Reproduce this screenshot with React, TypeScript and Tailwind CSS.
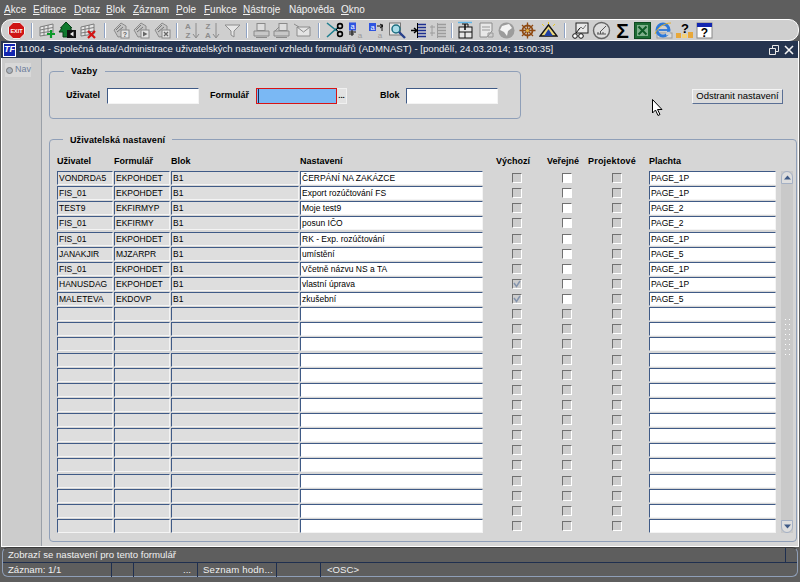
import { ReactNode } from 'react'

const menus = [
  ['A', 'kce', 'w-[29px]'],
  ['E', 'ditace', 'w-[41px]'],
  ['D', 'otaz', 'w-[32px]'],
  ['B', 'lok', 'w-[27px]'],
  ['Z', 'áznam', 'w-[43px]'],
  ['P', 'ole', 'w-[28px]'],
  ['F', 'unkce', 'w-[39px]'],
  ['N', 'ástroje', 'w-[46px]'],
  ['', 'Nápověda', 'w-[52px]'],
  ['O', 'kno', 'w-[30px]'],
]

const records = [
  ['VONDRDA5', 'EKPOHDET', 'B1', 'ČERPÁNÍ NA ZAKÁZCE', 'PAGE_1P', false],
  ['FIS_01', 'EKPOHDET', 'B1', 'Export rozúčtování FS', 'PAGE_1P', false],
  ['TEST9', 'EKFIRMYP', 'B1', 'Moje test9', 'PAGE_2', false],
  ['FIS_01', 'EKFIRMY', 'B1', 'posun IČO', 'PAGE_2', false],
  ['FIS_01', 'EKPOHDET', 'B1', 'RK - Exp. rozúčtování', 'PAGE_1P', false],
  ['JANAKJIR', 'MJZARPR', 'B1', 'umístění', 'PAGE_5', false],
  ['FIS_01', 'EKPOHDET', 'B1', 'Včetně názvu NS a TA', 'PAGE_1P', false],
  ['HANUSDAG', 'EKPOHDET', 'B1', 'vlastní úprava', 'PAGE_1P', true],
  ['MALETEVA', 'EKDOVP', 'B1', 'zkušební', 'PAGE_5', true],
] as const

const rows = Array.from({ length: 24 }, (_, i) => records[i] ?? null)

function Ico({ children }: { children: ReactNode }) {
  return (
    <div className="flex w-[20.7px] shrink-0 justify-center">
      <svg width="19" height="19" viewBox="0 0 19 19">{children}</svg>
    </div>
  )
}

function Sep({ className }: { className: string }) {
  return (
    <div className={`flex shrink-0 justify-center ${className}`}>
      <div className="h-[15px] w-[2px] border-r border-white bg-[#8fa3c4]" />
    </div>
  )
}

function GridDoc() {
  return (
    <g fill="none" stroke="#7c7c7c">
      <path d="M2 6 L15 3 V13 L2 15 Z" fill="#e6e6e6" />
      <path d="M2 9 L15 6.5 M2 12 L15 10 M6 5 V14.5 M10 4 V14" />
    </g>
  )
}

function Stack({ children }: { children: ReactNode }) {
  return (
    <g>
      <path d="M2 9 L9 2 L14 5 L14 15 L6 16 Z" fill="#c4c4c4" stroke="#8c8c8c" />
      <path d="M4 9 L9 4 M5 11 L11 6" stroke="#777" fill="none" />
      <rect x="9" y="9" width="8" height="8" fill="#e4e4e4" stroke="#888" />
      {children}
    </g>
  )
}

function Printer({ fancy }: { fancy?: boolean }) {
  return (
    <g fill="#ddd" stroke="#8a8a8a">
      <rect x={fancy ? 7 : 5} y="2.5" width="8" height="7" />
      <path d="M2 10 H17 V15 H2 Z" fill="#c8c8c8" />
      <path d="M4 16.5 H15" />
      {fancy && <path d="M3 10 L7 6" />}
    </g>
  )
}

function Lines({ c, arrow }: { c: string; arrow?: boolean }) {
  return (
    <g stroke={c} fill="none">
      <path d="M9 3.5 H17 M9 6.5 H17 M9 9.5 H17 M9 12.5 H17 M9 15.5 H17" strokeWidth="1.4" />
      <path d="M8.5 2 V17" stroke={arrow ? '#000' : c} />
      {arrow ? (
        <path d="M2 9.5 H7 M5 7 L8 9.5 L5 12" stroke="#000" strokeWidth="1.4" />
      ) : (
        <path d="M3 4 V15 M1 6 H6 M1 12 H6" />
      )}
    </g>
  )
}

function Field({ children, shade }: { children?: ReactNode; shade?: boolean }) {
  return (
    <div
      className={`h-[14px] truncate border-t border-r border-b border-l border-t-[#3f5a86] border-l-[#3f5a86] border-r-[#f4f4f4] border-b-[#f4f4f4] pl-px text-[8.5px] leading-[13px] text-black ${shade ? 'bg-[#dedede]' : 'bg-white'}`}
    >
      {children}
    </div>
  )
}

function Check({ on, checked }: { on?: boolean; checked?: boolean }) {
  return (
    <div
      className={`flex h-[10px] w-[10px] items-center justify-center border-t border-l border-r border-b border-t-[#707070] border-l-[#707070] border-r-white border-b-white ${on ? 'bg-white' : 'bg-[#cdcdcd]'}`}
    >
      {checked && (
        <svg width="8" height="8" viewBox="0 0 8 8">
          <path d="M1 3 L3.5 6.5 L7 1" fill="none" stroke="#8494ad" strokeWidth="1.5" />
        </svg>
      )}
    </div>
  )
}

function Lov() {
  return (
    <div className="flex h-[16px] w-[10px] items-center justify-center border-t border-r border-b border-[#f0f0f0] bg-[#e2e2e2] text-[8px] leading-none font-bold text-black">
      ...
    </div>
  )
}

export default function App() {
  return (
    <div className="flex h-[582px] w-[800px] flex-col overflow-hidden bg-[#5e5e5e] font-['Liberation_Sans',Arial,sans-serif] text-[10px] text-black">
      {/* Menu */}
      <div className="flex h-[19px] shrink-0 items-center pl-[4px] text-[10px] text-[#f2f2f2]">
        {menus.map(([u, rest, w]) => (
          <span key={rest} className={`shrink-0 ${w}`}>
            <span className="underline">{u}</span>
            {rest}
          </span>
        ))}
      </div>

      {/* Toolbar */}
      <div className="mr-[1px] ml-[1px] flex h-[22px] shrink-0 items-center rounded-[10px] border border-white bg-[#cfcfcf] pl-[4px]">
        <Ico>
          <path d="M6 1.5 H13 L17.5 6 V13 L13 17.5 H6 L1.5 13 V6 Z" fill="#cf1414" stroke="#eee" />
          <text x="9.5" y="11.5" textAnchor="middle" fontSize="5.5" fontWeight="700" fill="#fff">EXIT</text>
        </Ico>
        <Sep className="w-[10px]" />
        <Ico>
          <GridDoc />
          <path d="M13 9 V17 M9 13 H17" stroke="#0a9a2a" strokeWidth="2.2" />
        </Ico>
        <Ico>
          <path d="M8 1 L14 7 L12 7 L15 11 L10 11 L10 16 L5 16 L5 11 L1 11 L4 7 L2.5 7 Z" fill="#0f7a2e" stroke="#063d16" />
          <rect x="9" y="9" width="9" height="8" fill="#111" />
          <path d="M12 13 L15.5 10.5 V15.5 Z" fill="#eee" />
        </Ico>
        <Ico>
          <GridDoc />
          <path d="M9 10 L16 17 M16 10 L9 17" stroke="#d41414" strokeWidth="2.2" />
        </Ico>
        <Sep className="w-[12px]" />
        <Ico>
          <Stack>
            <text x="13" y="15.5" textAnchor="middle" fontSize="7" fontWeight="700" fill="#666">?</text>
          </Stack>
        </Ico>
        <Ico>
          <Stack>
            <path d="M11 10.5 L15.5 13 L11 15.5 Z" fill="#666" />
          </Stack>
        </Ico>
        <Ico>
          <Stack>
            <path d="M11 11 L15 15 M15 11 L11 15" stroke="#666" strokeWidth="1.3" />
          </Stack>
        </Ico>
        <Sep className="w-[8px]" />
        <Ico>
          <text x="6" y="8" textAnchor="middle" fontSize="8" fontWeight="700" fill="#8c8c8c">A</text>
          <text x="6" y="17" textAnchor="middle" fontSize="8" fontWeight="700" fill="#8c8c8c">Z</text>
          <path d="M14 2 V16 M11 13 L14 17 L17 13" fill="none" stroke="#8c8c8c" />
        </Ico>
        <Ico>
          <text x="6" y="8" textAnchor="middle" fontSize="8" fontWeight="700" fill="#8c8c8c">Z</text>
          <text x="6" y="17" textAnchor="middle" fontSize="8" fontWeight="700" fill="#8c8c8c">A</text>
          <path d="M14 2 V16 M11 13 L14 17 L17 13" fill="none" stroke="#8c8c8c" />
        </Ico>
        <Ico>
          <path d="M2 4 H17 L11 10 V16 L8 14 V10 Z" fill="#e6e6e6" stroke="#8c8c8c" />
        </Ico>
        <Sep className="w-[8px]" />
        <Ico>
          <Printer />
        </Ico>
        <Ico>
          <Printer fancy />
        </Ico>
        <Ico>
          <path d="M4 6 H17 V15 H4 Z" fill="#e4e4e4" stroke="#8c8c8c" />
          <path d="M4 6 L10.5 11 L17 6 M1 3 L6 6" fill="none" stroke="#8c8c8c" />
        </Ico>
        <Sep className="w-[12px]" />
        <Ico>
          <path d="M1 2 L11 10 M1 16 L11 7" stroke="#1f7f8f" strokeWidth="1.6" />
          <circle cx="14" cy="5" r="2.4" fill="none" stroke="#000" strokeWidth="1.6" />
          <circle cx="14" cy="13" r="2.4" fill="none" stroke="#000" strokeWidth="1.6" />
          <path d="M10 9 L12.5 6.5 M10 8 L12.5 11" stroke="#000" />
        </Ico>
        <Ico>
          <rect x="3" y="1.5" width="7" height="8" fill="#2f55e0" />
          <text x="6.5" y="8" textAnchor="middle" fontSize="7.5" fill="#fff">a</text>
          <path d="M3 11 H10 M3 13 H8 M6 9 V15" stroke="#111" />
          <text x="14" y="16.5" textAnchor="middle" fontSize="8" fill="#9a9a9a">a</text>
        </Ico>
        <Ico>
          <rect x="2" y="2" width="7" height="8" fill="#2f55e0" />
          <text x="5.5" y="8.5" textAnchor="middle" fontSize="7.5" fill="#fff">a</text>
          <path d="M10 5 H16 M13 3 L16 5 L13 7 M15 3 V10" stroke="#111" fill="none" />
          <text x="13" y="17" textAnchor="middle" fontSize="8" fill="#9a9a9a">a</text>
        </Ico>
        <Ico>
          <rect x="1.5" y="2" width="11" height="12" fill="#e8e8e8" stroke="#777" />
          <circle cx="8" cy="8" r="4" fill="#a8dce8" stroke="#1c6f80" strokeWidth="1.5" />
          <path d="M11 11 L17 17" stroke="#27408b" strokeWidth="2.4" />
        </Ico>
        <Ico>
          <Lines c="#1c2f90" arrow />
        </Ico>
        <Ico>
          <Lines c="#9c9c9c" />
        </Ico>
        <Sep className="w-[6px]" />
        <Ico>
          <path d="M2 1.5 H16" stroke="#5fb6e8" strokeWidth="1.4" />
          <rect x="3" y="6" width="13" height="11" fill="#e6e6e6" stroke="#111" />
          <path d="M3 11 H16 M9 11 V17 M6 3 H12 V6" stroke="#111" fill="none" />
          <path d="M9 3 V9" stroke="#111" strokeWidth="1.6" />
        </Ico>
        <Ico>
          <path d="M3 2 H15 V10 L10 16 H3 Z" fill="#e8e8e8" stroke="#8c8c8c" />
          <path d="M5 6 H13 M5 9 H13 M11 12 H16 V16 H11 Z" fill="none" stroke="#9a9a9a" />
        </Ico>
        <Ico>
          <circle cx="9.5" cy="9.5" r="8" fill="#9c9c9c" />
          <path d="M5 5 L12 3 L15 7 L11 10 L10 15 L7 11 L3 9 Z" fill="#f4f4f4" />
        </Ico>
        <Ico>
          <circle cx="9.5" cy="9.5" r="5" fill="none" stroke="#8f4a12" strokeWidth="1.8" />
          <path d="M9.5 1.5 V17.5 M1.5 9.5 H17.5 M4 4 L15 15 M15 4 L4 15" stroke="#8f4a12" strokeWidth="1.3" />
          <circle cx="9.5" cy="9.5" r="1.6" fill="#e0b040" />
        </Ico>
        <Ico>
          <path d="M9.5 4 L18 15 H1 Z" fill="#ecd87a" stroke="#111" strokeWidth="1.4" />
          <path d="M9.5 8 L14 15 H5 Z" fill="#1e3fa0" />
          <path d="M3 3 L5 5 M16 3 L14 5 M9.5 1 V3" stroke="#e8c820" />
        </Ico>
        <Sep className="w-[12px]" />
        <Ico>
          <rect x="5" y="2" width="12" height="10" fill="#e8e8e8" stroke="#222" />
          <path d="M7 9 L10 6 L12 8 L15 4" fill="none" stroke="#777" />
          <circle cx="4" cy="15" r="2.3" fill="#fff" stroke="#111" />
          <circle cx="10" cy="15" r="2.3" fill="#fff" stroke="#111" />
          <path d="M5 12 L9 7" stroke="#111" />
        </Ico>
        <Ico>
          <circle cx="9.5" cy="9.5" r="8" fill="#dedede" stroke="#666" strokeWidth="1.4" />
          <path d="M5 13 H14 M6 11 V13 M8.5 10 V13 M11 11 V13 M9 10 L14 5" stroke="#555" fill="none" />
        </Ico>
        <Ico>
          <text x="9.5" y="16.5" textAnchor="middle" fontSize="21" fontWeight="700" fill="#000">Σ</text>
        </Ico>
        <Ico>
          <rect x="1.5" y="1.5" width="16" height="16" fill="#1d6b34" stroke="#0e4a20" />
          <rect x="4" y="4" width="11" height="11" fill="#7fb08c" />
          <path d="M5.5 5.5 L13.5 13.5 M13.5 5.5 L5.5 13.5" stroke="#0e5a26" strokeWidth="2" />
        </Ico>
        <Ico>
          <rect x="3" y="12" width="15" height="5" fill="#dcdcdc" stroke="#999" />
          <circle cx="9" cy="9" r="6" fill="none" stroke="#2d78d8" strokeWidth="3" />
          <path d="M5 9 H14" stroke="#2d78d8" strokeWidth="1.8" />
          <path d="M12 13 L16 12" stroke="#cfcfcf" strokeWidth="3" />
          <path d="M1 13 C3 7 10 2 17 2" fill="none" stroke="#e0b030" />
        </Ico>
        <Ico>
          <text x="10" y="12" textAnchor="middle" fontSize="13" fontWeight="700" fill="#000">?</text>
          <rect x="1" y="12" width="5" height="5" fill="#e8a83a" />
          <rect x="7" y="13" width="5" height="4" fill="#f4d27a" />
          <rect x="13" y="11" width="5" height="6" fill="#e8a83a" />
        </Ico>
        <Ico>
          <rect x="2" y="2" width="15" height="15" fill="#fff" stroke="#888" />
          <rect x="2" y="2" width="15" height="4" fill="#1226b0" />
          <text x="9.5" y="16" textAnchor="middle" fontSize="12" fontWeight="700" fill="#000">?</text>
        </Ico>
      </div>

      {/* MDI window */}
      <div className="ml-[1px] flex h-[506px] w-[798px] shrink-0 flex-col border-r border-b border-white">
        <div className="flex h-[17px] shrink-0 items-center bg-[#25344f] pr-[4px] text-[9.6px] text-[#f0f0f0]">
          <div className="mr-[3px] ml-[2px] flex h-[14px] w-[13px] items-center justify-center border border-white bg-[#1226b0] text-[9px] leading-none font-bold text-white italic">
            TF
          </div>
          <span className="whitespace-nowrap">
            11004 - Společná data/Administrace uživatelských nastavení vzhledu formulářů (ADMNAST) - [pondělí, 24.03.2014; 15:00:35]
          </span>
          <div className="ml-auto flex items-center gap-[5px]">
            <svg width="10" height="10" viewBox="0 0 10 10">
              <path d="M3.5 .5 H9.5 V6.5 H7 M.5 3.5 H6.5 V9.5 H.5 Z M3.5 .5 V3.5" fill="none" stroke="#e8e8e8" />
            </svg>
            <svg width="10" height="10" viewBox="0 0 10 10">
              <path d="M1 1 L9 9 M9 1 L1 9" fill="none" stroke="#f4f4f4" strokeWidth="1.6" />
            </svg>
          </div>
        </div>

        <div className="relative flex min-h-0 flex-1 bg-[#d6d6d6]">
          {/* Navigator stub */}
          <div className="w-[41px] shrink-0 border-r border-l border-r-[#9aa0a8] border-l-white bg-[#cccccc] pt-[5px] pl-[3px]">
            <div className="flex h-[14px] w-[26px] items-center gap-[2px] bg-[#d8d8d8] pl-[1px] text-[9px] text-[#6f7f9c]">
              <span className="h-[7px] w-[7px] shrink-0 rounded-full border border-[#777] bg-[#aab4c0]" />
              Nav
            </div>
          </div>

          <div className="flex min-w-0 flex-1 flex-col pt-[13px] pl-[7px]">
            {/* Vazby */}
            <div className="flex items-start">
              <div className="relative h-[48px] w-[472px] shrink-0 rounded-[4px] border border-[#8f9fb8]">
                <span className="absolute top-[-7px] left-[14px] bg-[#d6d6d6] px-[7px] text-[9px] leading-[12px] font-bold tracking-[0.2px]">
                  Vazby
                </span>
                <div className="flex items-center pt-[16px] text-[9px] font-bold">
                  <span className="w-[50px] text-right">Uživatel</span>
                  <div className="ml-[7px] h-[16px] w-[92px] border-t border-r border-b border-l border-t-[#3f5a86] border-l-[#3f5a86] border-r-[#f4f4f4] border-b-[#f4f4f4] bg-white" />
                  <span className="ml-[11px] w-[40px]">Formulář</span>
                  <div className="ml-[6px] flex h-[16px] w-[81px] border border-[#d81414] bg-[#7ab8f4]">
                    <div className="ml-[1px] w-[1px] bg-[#103060]" />
                  </div>
                  <Lov />
                  <span className="ml-[33px] w-[26px]">Blok</span>
                  <div className="h-[16px] w-[92px] border-t border-r border-b border-l border-t-[#3f5a86] border-l-[#3f5a86] border-r-[#f4f4f4] border-b-[#f4f4f4] bg-white" />
                </div>
              </div>
              <div className="mt-[18px] ml-[171px] flex h-[15px] w-[91px] items-center justify-center border-t border-r border-b border-l border-t-[#f4f4f4] border-l-[#f4f4f4] border-r-[#5a6f94] border-b-[#5a6f94] bg-[#dcdcdc] text-[9.5px]">
                Odstranit nastavení
              </div>
            </div>

            {/* Uživatelská nastavení */}
            <div className="relative mt-[20px] h-[403px] w-[748px] rounded-[4px] border border-[#8f9fb8]">
              <span className="absolute top-[-6px] left-[13px] bg-[#d6d6d6] px-[7px] text-[9px] leading-[12px] font-bold tracking-[0.1px]">
                Uživatelská nastavení
              </span>
              <div className="flex pt-[15px] pl-[7px]">
                <div className="w-[720px] shrink-0">
                  <div className="mb-[2px] grid h-[14px] grid-cols-[57px_57px_129px_192px_50px_50px_50px_7px_127px] items-center text-[9px] font-bold">
                    <span>Uživatel</span>
                    <span>Formulář</span>
                    <span>Blok</span>
                    <span>Nastavení</span>
                    <span className="pr-[8px] text-center">Výchozí</span>
                    <span className="pr-[8px] text-center">Veřejné</span>
                    <span className="-ml-[4px] whitespace-nowrap tracking-[0.2px]">Projektové</span>
                    <span />
                    <span>Plachta</span>
                  </div>
                  <div className="grid h-[363px] grid-rows-[repeat(24,1fr)]">
                    {rows.map((r, i) => (
                      <div
                        key={i}
                        className="grid grid-cols-[57px_57px_129px_192px_50px_50px_50px_7px_127px] items-start"
                      >
                        <div className="pr-[1px]">
                          <Field shade>{r?.[0]}</Field>
                        </div>
                        <div className="pr-[1px]">
                          <Field shade>{r?.[1]}</Field>
                        </div>
                        <div className="pr-[1px]">
                          <Field shade>{r?.[2]}</Field>
                        </div>
                        <div className="pr-[9px]">
                          <Field>{r?.[3]}</Field>
                        </div>
                        <div className="flex justify-center pt-[2px]">
                          <Check checked={r?.[5] === true} />
                        </div>
                        <div className="flex justify-center pt-[2px]">
                          <Check on={!!r} />
                        </div>
                        <div className="flex justify-center pt-[2px]">
                          <Check />
                        </div>
                        <span />
                        <Field>{r?.[4]}</Field>
                      </div>
                    ))}
                  </div>
                </div>

                {/* Scrollbar */}
                <div className="mt-[16px] ml-[4px] flex h-[362px] w-[12px] shrink-0 flex-col items-center bg-[#c9c9c9]">
                  <div className="flex h-[13px] w-[12px] items-center justify-center rounded-t-[6px] border border-[#a4b0c4] bg-[#dedede]">
                    <svg width="7" height="5" viewBox="0 0 7 5">
                      <path d="M3.5 .5 L7 4.5 H0 Z" fill="#3f5a86" />
                    </svg>
                  </div>
                  <div className="flex flex-1 flex-col items-center justify-center gap-[4px] pb-[30px]">
                    {[0, 1, 2, 3, 4, 5, 6, 7].map((d) => (
                      <div key={d} className="flex gap-[3px]">
                        <span className="h-[1px] w-[1px] bg-white" />
                        <span className="h-[1px] w-[1px] bg-white" />
                      </div>
                    ))}
                  </div>
                  <div className="flex h-[13px] w-[12px] items-center justify-center rounded-b-[6px] border border-[#a4b0c4] bg-[#dedede]">
                    <svg width="7" height="5" viewBox="0 0 7 5">
                      <path d="M3.5 4.5 L7 .5 H0 Z" fill="#3f5a86" />
                    </svg>
                  </div>
                </div>
              </div>
            </div>
          </div>

          {/* Mouse cursor */}
          <svg className="absolute top-[41px] left-[651px]" width="12" height="18" viewBox="0 0 12 18">
            <path d="M.5 .5 V14 L3.5 11 L6 16.5 L8 15.5 L5.5 10.5 H10 Z" fill="#fff" stroke="#000" />
          </svg>
        </div>
      </div>

      {/* Status */}
      <div className="mr-[2px] ml-[2px] h-[30px] shrink-0 rounded-[6px] border-t border-r border-b border-l border-t-[#3a3a3a] border-r-[#8f9fb8] border-b-[#8f9fb8] border-l-[#8f9fb8] text-[9.6px] text-[#f0f0f0]">
        <div className="flex h-[15px] items-center border-b border-[#1f2f4f] pl-[5px]">
          <span className="flex-1">Zobrazí se nastavení pro tento formulář</span>
          <span className="mr-[11px] h-[14px] w-px bg-[#1f2f4f]" />
        </div>
        <div className="grid h-[13px] grid-cols-[103px_22px_64px_79px_44px_auto] items-center pl-[5px]">
          <span>Záznam: 1/1</span>
          <span className="h-full border-l border-[#1f2f4f]" />
          <span className="h-full border-l border-[#1f2f4f] pr-[6px] text-right">...</span>
          <span className="h-full border-l border-[#1f2f4f] pl-[5px] tracking-[0.2px]">Seznam hodn...</span>
          <span className="h-full border-l border-[#1f2f4f]" />
          <span className="h-full border-l border-[#1f2f4f] pl-[6px]">&lt;OSC&gt;</span>
        </div>
      </div>
    </div>
  )
}
